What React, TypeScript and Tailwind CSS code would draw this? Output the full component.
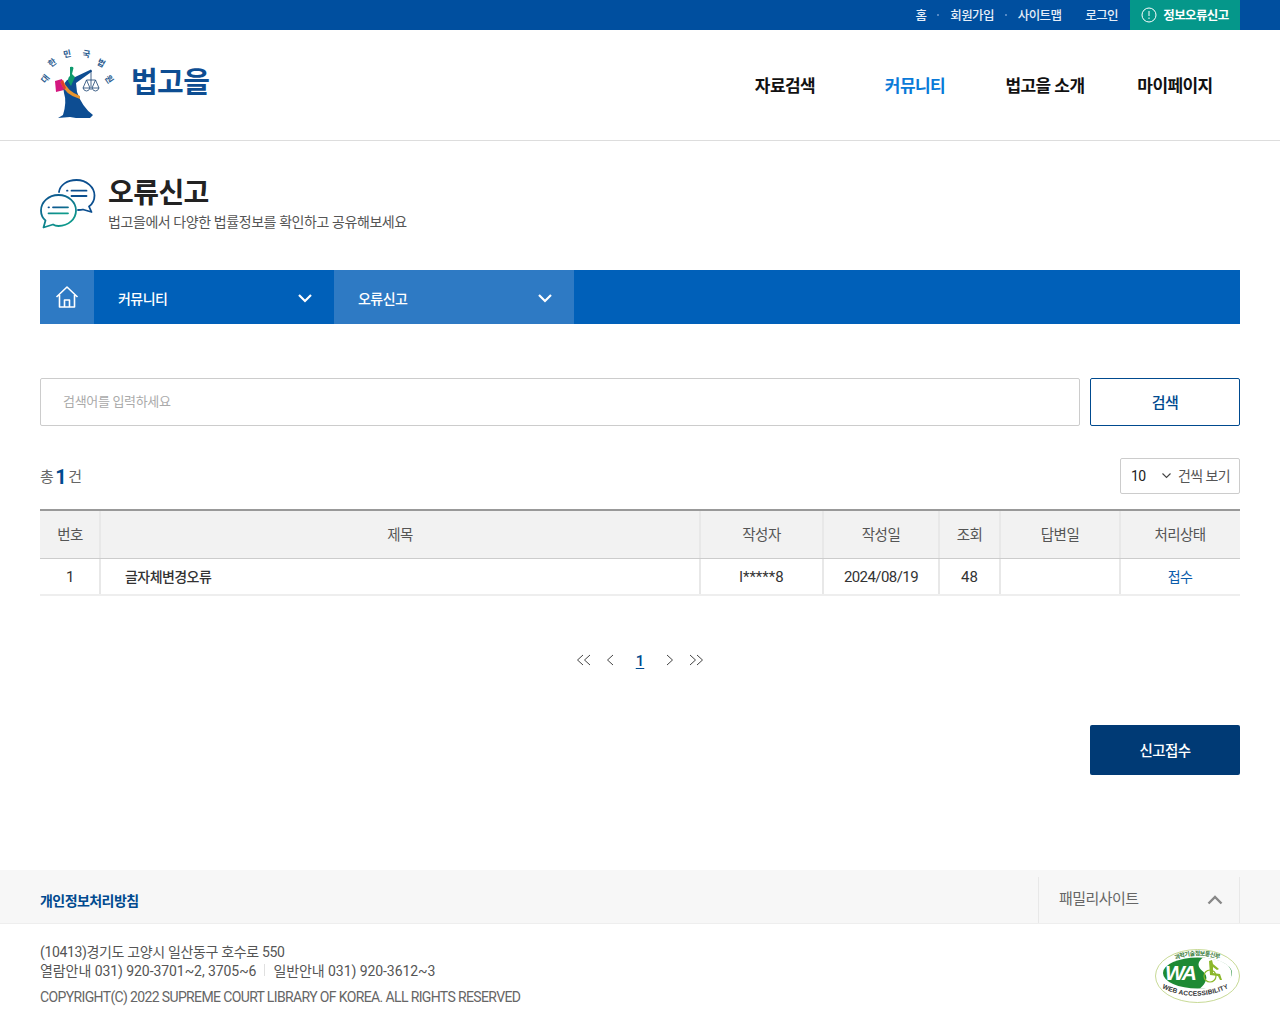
import React from "react";

const font = { fontFamily: 'Roboto, "Noto Sans CJK KR", "Noto Sans", sans-serif' };

function Logo() {
  return (
    <svg width="76" height="74" viewBox="0 0 76 74" className="shrink-0">
      <path d="M15 34 L22 32 L24 43 L16 45z" fill="#d4177f" />
      <path d="M27 33 L33 31 L51 22.5 L52 24.5 L36 36 L37 45 Q42 60 53 68 L50 71 L36 71 L30 70 L18 71 L23 68 Q27 55 24 46 Q22 38 27 33z" fill="#0d4d92" />
      <path d="M30 20 q3 -1 3.5 1 l-1 4 -0.5 2 l3 3 -4 9 -3 -5 q0 -4 2 -5z" fill="#0e9a6d" />
      <path d="M23 33 Q27 44 40 49 L40 52 Q25 48 20.5 35z" fill="#e8952f" />
      <path d="M20.5 35 L23 33 Q24 37 26 41 L24 43z" fill="#e13a32" />
      <g fill="none" stroke="#17406f" strokeWidth="0.8">
        <path d="M51 23 V43 M46.5 33 H55.5 M46.5 33 L43 41 M46.5 33 L50 41 M55.5 33 L52 41 M55.5 33 L59 41" />
        <path d="M43 41 H50 Q49 44 46.5 44 T43 41z M52 41 H59 Q58 44 55.5 44 T52 41z" />
      </g>
      <g fontSize="8.5" fill="#2b5c8f" fontWeight="700" textAnchor="middle" style={font}>
        <text x="5" y="35" transform="rotate(-50 5 32)">대</text>
        <text x="12" y="19" transform="rotate(-38 12 16)">한</text>
        <text x="27" y="10" transform="rotate(-12 27 7)">민</text>
        <text x="46" y="10" transform="rotate(10 46 7)">국</text>
        <text x="61" y="19" transform="rotate(30 61 16)">법</text>
        <text x="69" y="35" transform="rotate(55 69 32)">원</text>
      </g>
    </svg>
  );
}

function ChatIcon() {
  return (
    <svg width="56" height="50" viewBox="0 0 56 50" fill="none" strokeWidth="1.8" strokeLinecap="round" className="shrink-0">
      <defs>
        <linearGradient id="g" x1="0" y1="0" x2="0.6" y2="1">
          <stop offset="0" stopColor="#0c4f8f" />
          <stop offset="1" stopColor="#0f9a8c" />
        </linearGradient>
      </defs>
      <path d="M19 13 C20 6 27 1 36.5 1 C46.5 1 54.5 8 54.5 16.5 C54.5 21 52.5 25 49 27.5 L51.5 33 L43 30.5 C42 30.8 40 31 38 31" stroke="#0c4f8f" strokeLinejoin="round" />
      <path d="M27 11.7 h0.5 M31.5 11.7 h15 M31.5 17 h15" stroke="#0c4f8f" />
      <path d="M18.5 16 C8.5 16 1 23 1 31.5 C1 35.5 2.5 39 5.5 41.5 L3.5 48.5 L13 45.5 C14.5 46.5 16.5 47 18.5 47 C28.5 47 36 40 36 31.5 C36 23 28.5 16 18.5 16Z" stroke="url(#g)" strokeLinejoin="round" />
      <path d="M8.5 28.3 h0.5 M13 28.3 h15 M8.5 34.3 h19.5" stroke="url(#g)" />
    </svg>
  );
}

function Chevron() {
  return (
    <svg width="14" height="9" viewBox="0 0 14 9" fill="none" stroke="#fff" strokeWidth="2.2" className="mt-[2px]">
      <path d="M1 1 L7 7 L13 1" />
    </svg>
  );
}

function WaMark() {
  return (
    <svg width="86" height="56" viewBox="0 0 86 56">
      <ellipse cx="42.5" cy="27" rx="42" ry="26.5" fill="#fff" stroke="#b9cf7a" strokeWidth="0.8" />
      <ellipse cx="42.5" cy="24" rx="34.5" ry="15.5" fill="#1e8a34" />
      <path d="M48 8.5 q-9 7 0 14 q8 7 -3 17 q32 0 31.5 -15.5 q-1 -13 -28.5 -15.5z" fill="#fff" />
      <path d="M54 12 l3 -1 1 4 6 5 -2 1 -4 -3 0 6 7 1 2 6 -2 0 -2 -4 -8 -1z" fill="#8cb82b" />
      <circle cx="55" cy="27" r="6" fill="none" stroke="#8cb82b" strokeWidth="1.2" />
      <text x="25" y="31" fontSize="21" fontWeight="900" fontStyle="italic" fill="#fff" textAnchor="middle" letterSpacing="-2" style={{ fontFamily: '"Liberation Sans", sans-serif' }}>WA</text>
      <path id="waArc" d="M7 39 Q42 56 80 36" fill="none" />
      <text fontSize="6.6" fontWeight="700" fill="#333" letterSpacing="0.1" style={{ fontFamily: '"Liberation Sans", sans-serif' }}>
        <textPath href="#waArc">WEB ACCESSIBILITY</textPath>
      </text>
      <path id="waTop" d="M13 14 Q42 -1 74 14" fill="none" />
      <text fontSize="6" fontWeight="700" fill="#3b7d3b" style={font}>
        <textPath href="#waTop" startOffset="8">과학기술정보통신부</textPath>
      </text>
    </svg>
  );
}

const Sep = () => <span className="block h-[2px] w-[2px] rounded-full bg-[#6f9bd0]" />;

const cols = [
  { label: "번호", w: "w-[60px]" },
  { label: "제목", w: "w-[600px]" },
  { label: "작성자", w: "w-[123px]" },
  { label: "작성일", w: "w-[116px]" },
  { label: "조회", w: "w-[61px]" },
  { label: "답변일", w: "w-[120px]" },
  { label: "처리상태", w: "w-[120px]" },
];

const Divider = () => <span className="absolute -right-[1px] top-0 bottom-0 w-[2px] bg-[#e8e8e8]" />;

export default function App() {
  return (
    <div className="w-[1280px] h-[1024px] bg-white overflow-hidden flex flex-col tracking-[-0.035em]" style={font}>
      {/* top bar */}
      <div className="h-[30px] bg-[#004f9f] flex justify-end pr-10 shrink-0">
        <div className="flex items-center text-[12.5px] font-medium text-[#e6eef8] tracking-[-0.05em]">
          <span className="pt-[3px]">홈</span>
          <span className="mx-[11px]"><Sep /></span>
          <span className="pt-[3px]">회원가입</span>
          <span className="mx-[11px]"><Sep /></span>
          <span className="pt-[3px]">사이트맵</span>
          <span className="ml-[24px] pt-[3px]">로그인</span>
          <div className="ml-[12px] w-[110px] h-[30px] bg-[#05978a] flex items-center justify-center gap-[6px] text-white font-bold">
            <svg width="16" height="16" viewBox="0 0 16 16" fill="none" stroke="#fff" strokeWidth="1">
              <circle cx="8" cy="8" r="7" />
              <path d="M8 4 v5 M8 10.5 v1.5" />
            </svg>
            <span className="pt-[3px]">정보오류신고</span>
          </div>
        </div>
      </div>

      {/* header */}
      <div className="h-[111px] shrink-0 border-b border-[#dddddd] flex items-center justify-between pl-10 pr-10">
        <div className="flex items-center gap-[15px] -mt-[2px]">
          <Logo />
          <span className="text-[29px] font-bold text-[#0d4d92] leading-none -mt-[2px]">법고을</span>
        </div>
        <nav className="flex text-[17px] font-bold text-[#111111] h-full items-center pt-[3px]">
          <span className="w-[130px] text-center">자료검색</span>
          <span className="w-[130px] text-center text-[#0a7ad8]">커뮤니티</span>
          <span className="w-[130px] text-center">법고을 소개</span>
          <span className="w-[130px] text-center">마이페이지</span>
        </nav>
      </div>

      {/* title */}
      <div className="shrink-0 flex pl-10 pt-[38px] h-[129px]">
        <ChatIcon />
        <div className="ml-3">
          <h1 className="text-[28px] font-bold text-[#222222] leading-[30px]">오류신고</h1>
          <p className="text-[14px] text-[#555555] leading-[22px] mt-[2px] tracking-[-0.03em]">법고을에서 다양한 법률정보를 확인하고 공유해보세요</p>
        </div>
      </div>

      {/* breadcrumb */}
      <div className="mx-10 h-[54px] shrink-0 bg-[#0060b9] flex text-[14px] text-white font-medium">
        <div className="w-[54px] bg-[#2e7ac4] flex items-center justify-center">
          <svg width="24" height="24" viewBox="0 0 24 24" fill="none" stroke="#fff" strokeWidth="1.6" strokeLinejoin="round">
            <path d="M1.5 12 L12 2 L22.5 12 M4.5 10 V22 H19.5 V10 M9.5 22 V15 H14.5 V22" />
          </svg>
        </div>
        <div className="w-[240px] flex items-center justify-between pl-6 pr-[22px]">
          <span className="mt-[5px]">커뮤니티</span>
          <Chevron />
        </div>
        <div className="w-[240px] bg-[#2e7ac4] flex items-center justify-between pl-6 pr-[22px]">
          <span className="mt-[5px]">오류신고</span>
          <Chevron />
        </div>
      </div>

      {/* search */}
      <div className="mx-10 mt-[54px] flex gap-[10px] shrink-0">
        <div className="flex-1 h-12 border border-[#cccccc] rounded-[2px] flex items-center pl-[22px] text-[13px] tracking-[-0.025em] text-[#aaaaaa]">검색어를 입력하세요</div>
        <button className="w-[150px] h-12 pt-[2px] border border-[#004a8f] rounded-[2px] text-[15px] font-medium text-[#004a8f]">검색</button>
      </div>

      {/* count */}
      <div className="mx-10 mt-8 h-9 flex items-center justify-between shrink-0">
        <div className="flex items-center text-[15px] text-[#666666] pt-[2px]">
          <span>총</span>
          <span className="mx-[2px] text-[20px] font-bold text-[#004a8f]">1</span>
          <span>건</span>
        </div>
        <div className="w-[120px] h-9 border border-[#cccccc] rounded-[2px] flex items-center pl-[10px] text-[14px] text-[#555555]">
          <span className="text-[14px] tracking-[-0.05em] text-[#222222] w-[31px]">10</span>
          <svg width="9" height="6" viewBox="0 0 9 6" fill="none" stroke="#444" strokeWidth="1.1" className="mr-[7px]">
            <path d="M0.5 0.5 L4.5 4.5 L8.5 0.5" />
          </svg>
          <span>건씩 보기</span>
        </div>
      </div>

      {/* table */}
      <div className="mx-10 mt-[15px] shrink-0 border-t-2 border-[#999999]">
        <div className="flex h-[48px] bg-[#f2f2f2] border-b border-[#cccccc] text-[14.5px] text-[#555555]">
          {cols.map((c, i) => (
            <div key={c.label} className={`${c.w} relative flex items-center justify-center pt-[2px]`}>
              {c.label}
              {i < 6 && <Divider />}
            </div>
          ))}
        </div>
        <div className="flex h-[37px] border-b-2 border-[#eeeeee] text-[14px] text-[#333333]">
          <div className="w-[60px] relative flex items-center justify-center pt-[1px] text-[15px]">1<Divider /></div>
          <div className="w-[600px] relative flex items-center pl-[25px] pt-[1px] font-medium">글자체변경오류<Divider /></div>
          <div className="w-[123px] relative flex items-center justify-center pt-[1px] text-[15px] tracking-normal">l*****8<Divider /></div>
          <div className="w-[116px] relative flex items-center justify-center pt-[1px] text-[15px]">2024/08/19<Divider /></div>
          <div className="w-[61px] relative flex items-center justify-center pt-[1px] text-[15px] tracking-normal">48<Divider /></div>
          <div className="w-[120px] relative"><Divider /></div>
          <div className="w-[120px] flex items-center justify-center pt-[1px] text-[#0b5cab]">접수</div>
        </div>
      </div>

      {/* pagination */}
      <div className="mt-[53px] h-6 flex items-center justify-center shrink-0 text-[#444444]">
        <svg width="16" height="12" viewBox="0 0 16 12" fill="none" stroke="#444" strokeWidth="1" className="-mt-[2px]"><path d="M7 1 L1.5 6 L7 11 M14 1 L8.5 6 L14 11" /></svg>
        <svg width="8" height="12" viewBox="0 0 8 12" fill="none" stroke="#444" strokeWidth="1" className="ml-[14px] -mt-[2px]"><path d="M7 1 L1.5 6 L7 11" /></svg>
        <span className="mx-[22px] text-[15px] font-medium tracking-normal text-[#004a8f] underline underline-offset-2">1</span>
        <svg width="8" height="12" viewBox="0 0 8 12" fill="none" stroke="#444" strokeWidth="1" className="mr-[14px] -mt-[2px]"><path d="M1 1 L6.5 6 L1 11" /></svg>
        <svg width="16" height="12" viewBox="0 0 16 12" fill="none" stroke="#444" strokeWidth="1" className="-mt-[2px]"><path d="M2 1 L7.5 6 L2 11 M9 1 L14.5 6 L9 11" /></svg>
      </div>

      {/* report button */}
      <div className="mx-10 mt-[52px] flex justify-end shrink-0">
        <button className="w-[150px] h-[50px] pt-[3px] bg-[#003a75] rounded-[2px] text-[14.5px] font-medium text-white">신고접수</button>
      </div>

      {/* footer */}
      <div className="mt-[95px] h-[54px] shrink-0 bg-[#f7f7f7] border-b border-[#eeeeee] flex items-start justify-between pl-10 pr-10">
        <a className="text-[14px] font-bold text-[#004a8f] mt-[21px] leading-[20px]">개인정보처리방침</a>
        <div className="w-[202px] h-[46px] mt-[7px] border-x border-[#e8e8e8] flex items-center justify-between pl-5 pr-4 text-[15px] text-[#666666]">
          <span className="-mt-[2px]">패밀리사이트</span>
          <svg width="16" height="10" viewBox="0 0 16 10" fill="none" stroke="#888" strokeWidth="2.4"><path d="M1.5 8.5 L8 2 L14.5 8.5" /></svg>
        </div>
      </div>
      <div className="flex-1 flex justify-between pl-10 pr-10 pt-[19px]">
        <div className="text-[14px] leading-[19px] text-[#555555]">
          <p className="tracking-[-0.025em]">(10413)경기도 고양시 일산동구 호수로 550</p>
          <p className="tracking-[-0.005em]">
            열람안내 031) 920-3701~2, 3705~6
            <span className="inline-block w-px h-3 bg-[#e0e0e0] mx-2" />
            일반안내 031) 920-3612~3
          </p>
          <p className="mt-[7px] text-[#666666] tracking-[-0.045em]">COPYRIGHT(C) 2022 SUPREME COURT LIBRARY OF KOREA. ALL RIGHTS RESERVED</p>
        </div>
        <div className="mt-[6px] -mr-[1px]"><WaMark /></div>
      </div>
    </div>
  );
}
